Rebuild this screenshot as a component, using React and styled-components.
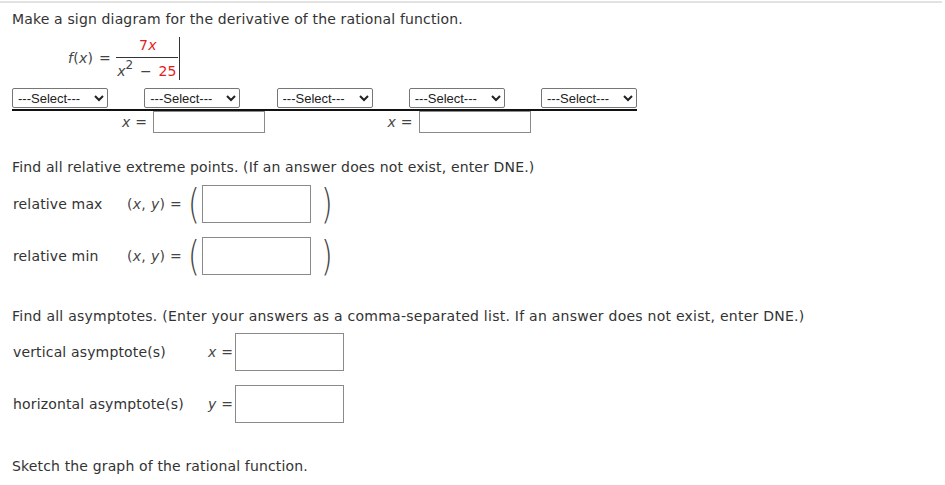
import React from 'react';
import styled, { createGlobalStyle } from 'styled-components';

const GlobalStyle = createGlobalStyle`
  body {
    margin: 0;
    background: #fff;
    font-family: "DejaVu Sans", Verdana, sans-serif;
    font-size: 14px;
    letter-spacing: 0.15px;
    color: #333;
  }
`;

const TopRule = styled.div`
  width: 942px;
  height: 2px;
  background: #e2e2e2;
  margin-top: 1px;
`;

const Page = styled.div`
  padding: 0 12px;
`;

const Prompt = styled.p`
  margin: ${(p) => p.mt || 0}px 0 0 0;
  line-height: 18px;
  height: 18px;
  white-space: nowrap;
  letter-spacing: ${(p) => p.ls ?? 0.15}px;
`;

const FormulaRow = styled.div`
  display: flex;
  align-items: center;
  margin: 8px 0 0 56px;
  height: 44px;
`;

const MathText = styled.span`
  color: #444;
  font-size: 14px;
  letter-spacing: 0.3px;
  word-spacing: 1px;
`;

const Var = styled.i`
  font-style: italic;
  color: ${(p) => (p.red ? '#e31b1b' : '#444')};
`;

const Num = styled.span`
  color: #e31b1b;
`;

const Fraction = styled.span`
  display: inline-flex;
  flex-direction: column;
  align-items: center;
  margin-left: 5px;
  padding-right: 1px;
  border-right: 1px solid #333;
  height: 43px;
  justify-content: center;
  font-size: 14px;
`;

const Numer = styled.span`
  padding: 0 2px 4px;
  line-height: 16px;
  margin-left: 2px;
`;

const Denom = styled.span`
  border-top: 1px solid #333;
  padding: 5px 1px 0;
  line-height: 16px;
  white-space: nowrap;
  color: #444;
  word-spacing: 2px;
  sup {
    font-size: 12px;
    position: relative;
    top: -4px;
    vertical-align: top;
    line-height: 12px;
  }
`;

const Diagram = styled.div`
  width: 625px;
  margin-top: 8px;
`;

const SelectRow = styled.div`
  display: flex;
  justify-content: space-between;
  border-bottom: 2px solid #111;
  padding-bottom: 1px;
`;

const SignSelect = styled.select`
  width: 96px;
  height: 20px;
  font-family: "Liberation Sans", Arial, sans-serif;
  font-size: 13px;
  letter-spacing: 0;
  color: #222;
  border: 1px solid #767676;
  border-radius: 2px;
  background: #fff;
  padding: 0 0 0 1px;
  margin: 0;
`;

const PointRow = styled.div`
  display: flex;
  height: 22px;
`;

const PointSlot = styled.div`
  display: flex;
  align-items: center;
  margin-left: ${(p) => p.ml}px;
`;

const EqLabel = styled.span`
  color: #444;
  margin-right: ${(p) => p.mr ?? 4}px;
  white-space: nowrap;
  font-size: 14px;
  letter-spacing: 0.3px;
`;

const SmallInput = styled.input`
  width: 112px;
  height: 22px;
  box-sizing: border-box;
  border: 1px solid #8a8a8a;
  margin: 0;
`;

const AnswerRow = styled.div`
  display: flex;
  align-items: center;
  margin-top: ${(p) => p.mt}px;
  height: 38px;
`;

const Label = styled.span`
  width: ${(p) => p.w}px;
  flex-shrink: 0;
  padding-left: 1px;
  white-space: nowrap;
`;

const Paren = styled.span`
  font-family: "DejaVu Sans ExtraLight", "DejaVu Sans", sans-serif;
  font-weight: 200;
  font-size: 40px;
  line-height: 38px;
  color: #444;
  display: inline-block;
  transform: scaleX(0.75);
  margin: ${(p) => p.m};
`;

const BigInput = styled.input`
  width: 109px;
  height: 38px;
  box-sizing: border-box;
  border: 1px solid #8a8a8a;
  margin: 0;
`;

const SignSelectBox = () => (
  <SignSelect defaultValue="">
    <option value="">---Select---</option>
    <option value="+">+</option>
    <option value="-">−</option>
  </SignSelect>
);

export default function App() {
  return (
    <>
      <GlobalStyle />
      <TopRule />
      <Page>
        <Prompt mt={7}>Make a sign diagram for the derivative of the rational function.</Prompt>
        <FormulaRow>
          <MathText>
            <Var>f</Var>(<Var>x</Var>) =
          </MathText>
          <Fraction>
            <Numer>
              <Num>7</Num><Var red>x</Var>
            </Numer>
            <Denom>
              <Var>x</Var><sup>2</sup> − <Num>25</Num>
            </Denom>
          </Fraction>
        </FormulaRow>
        <Diagram>
          <SelectRow>
            <SignSelectBox />
            <SignSelectBox />
            <SignSelectBox />
            <SignSelectBox />
            <SignSelectBox />
          </SelectRow>
          <PointRow>
            <PointSlot ml={110}>
              <EqLabel mr={6}><Var>x</Var> =</EqLabel>
              <SmallInput />
            </PointSlot>
            <PointSlot ml={122}>
              <EqLabel mr={6}><Var>x</Var> =</EqLabel>
              <SmallInput />
            </PointSlot>
          </PointRow>
        </Diagram>

        <Prompt mt={25}>Find all relative extreme points. (If an answer does not exist, enter DNE.)</Prompt>
        <AnswerRow mt={9}>
          <Label w={114}>relative max</Label>
          <EqLabel mr={3}>(<Var>x</Var>, <Var>y</Var>) =</EqLabel>
          <Paren m="0 0 0 1px">(</Paren>
          <BigInput />
          <Paren m="0 0 0 8px">)</Paren>
        </AnswerRow>
        <AnswerRow mt={14}>
          <Label w={114}>relative min</Label>
          <EqLabel mr={3}>(<Var>x</Var>, <Var>y</Var>) =</EqLabel>
          <Paren m="0 0 0 1px">(</Paren>
          <BigInput />
          <Paren m="0 0 0 8px">)</Paren>
        </AnswerRow>

        <Prompt mt={32} ls={0.25}>Find all asymptotes. (Enter your answers as a comma-separated list. If an answer does not exist, enter DNE.)</Prompt>
        <AnswerRow mt={8}>
          <Label w={195}>vertical asymptote(s)</Label>
          <EqLabel mr={2}><Var>x</Var> =</EqLabel>
          <BigInput />
        </AnswerRow>
        <AnswerRow mt={14}>
          <Label w={195}>horizontal asymptote(s)</Label>
          <EqLabel mr={2}><Var>y</Var> =</EqLabel>
          <BigInput />
        </AnswerRow>

        <Prompt mt={34}>Sketch the graph of the rational function.</Prompt>
      </Page>
    </>
  );
}
